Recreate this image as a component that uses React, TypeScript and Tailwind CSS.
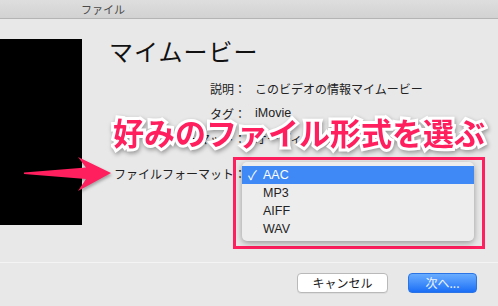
import React from "react";

const JP = "font-['Noto_Sans_CJK_JP','Noto_Sans',sans-serif]";

export default function App() {
  return (
    <div className={`relative w-[498px] h-[306px] overflow-hidden bg-[#e8e8e8] flex flex-col ${JP}`}>
      {/* title bar */}
      <div className="h-[19px] shrink-0 border-b border-[#b4b4b4] bg-gradient-to-b from-[#dedede] to-[#d2d2d2] flex items-center pl-[81px]">
        <span className="text-[11px] leading-none text-[#4a4a4a]">ファイル</span>
      </div>

      {/* main */}
      <div className="flex-1 flex border-b border-[#f4f4f4]">
        <div className="mt-[20px] w-[82px] h-[186px] bg-black shrink-0" />
        <div className="flex flex-col pl-[27px]">
          <div className="mt-[19px] text-[24px] leading-[26px] text-[#111] tracking-[1px]">マイムービー</div>
          <div className="mt-[12px] ml-[4px] grid grid-cols-[133px_1fr] gap-x-[9px] text-[12px] text-[#222]">
            <div className="h-[25px] flex items-center justify-end">説明：</div>
            <div className="h-[25px] flex items-center">このビデオの情報マイムービー</div>
            <div className="h-[25px] flex items-center justify-end">タグ：</div>
            <div className="h-[25px] flex items-center font-['Liberation_Sans',sans-serif] text-[12.5px]">iMovie</div>
            <div className="h-[25px] flex items-center justify-end">フォーマット：</div>
            <div className="h-[25px] flex items-center">オーディオとビデオ</div>
            <div className="mt-[10px] h-[25px] flex items-center justify-end">ファイルフォーマット：</div>
            <div className="mt-[10px] h-[25px]" />
          </div>
        </div>
      </div>

      {/* footer */}
      <div className="h-[43px] shrink-0 flex justify-end items-start gap-[20px] pt-[10px] pr-[21px]">
        <button className="w-[91px] h-[20px] rounded-[4px] bg-white border border-[#b9b9b9] shadow-[0_1px_0_rgba(0,0,0,0.05)] text-[12px] leading-none text-[#1a1a1a] flex items-center justify-center">
          キャンセル
        </button>
        <button className="w-[69px] h-[20px] rounded-[4px] bg-gradient-to-b from-[#69adff] to-[#1a6ef6] border border-[#2a74e6] text-[12px] leading-none text-[#eef4ff] flex items-center justify-center">
          次へ...
        </button>
      </div>

      {/* pink frame */}
      <div className="absolute left-[233px] top-[157px] w-[252px] h-[92px] border-[3px] border-[#ff1e5e]" />

      {/* popup menu */}
      <div className="absolute left-[242px] top-[162px] w-[232px] h-[79px] rounded-[5px] bg-[#ededed] shadow-[0_2px_6px_rgba(0,0,0,0.35)] pt-[4px] font-['Liberation_Sans',sans-serif] text-[12.5px] text-[#222]">
        <div className="h-[18px] bg-[#3e89f6] text-white flex items-center">
          <span className={`w-[21px] pl-[6px] text-[13px] ${JP}`}>✓</span>
          <span>AAC</span>
        </div>
        <div className="h-[18px] flex items-center pl-[21px]">MP3</div>
        <div className="h-[18px] flex items-center pl-[21px]">AIFF</div>
        <div className="h-[18px] flex items-center pl-[21px]">WAV</div>
      </div>

      {/* overlay caption */}
      <div className="absolute left-[113px] top-[114px] text-[31px] leading-[36px] font-bold text-[#ff1e5e] whitespace-nowrap [paint-order:stroke_fill] [-webkit-text-stroke:6px_#ffffff] [filter:drop-shadow(1px_2px_2px_rgba(0,0,0,0.35))]">
        好みのファイル形式を選ぶ
      </div>

      {/* arrow */}
      <svg className="absolute left-0 top-[150px] [filter:drop-shadow(1px_2px_1.5px_rgba(0,0,0,0.3))]" width="120" height="50" viewBox="0 150 120 50">
        <path d="M24 172.5 L86 167.5 L78 157 L111 173 L78 191 L86 179 L24 174 Z" fill="#ff1e5e" />
      </svg>
    </div>
  );
}
